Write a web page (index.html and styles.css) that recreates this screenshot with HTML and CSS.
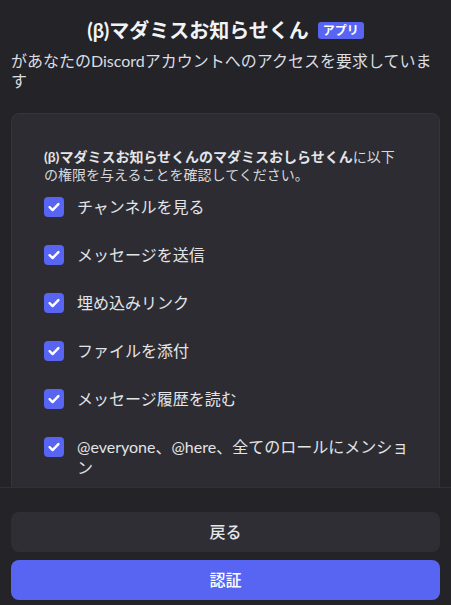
FILE: index.html
```html
<!DOCTYPE html>
<html lang="ja">
<head>
<meta charset="utf-8">
<title>認証</title>
<link rel="stylesheet" href="styles.css">
</head>
<body>
<div class="page">
  <main class="content">
    <header class="header">
      <h1 class="title">(β)マダミスお知らせくん<span class="badge">アプリ</span></h1>
      <p class="subtitle">があなたのDiscordアカウントへのアクセスを要求しています</p>
    </header>
    <section class="card">
      <p class="intro"><b>(β)マダミスお知らせくんのマダミスおしらせくん</b>に以下の権限を与えることを確認してください。</p>
      <ul class="perms">
        <li class="perm"><span class="check"><svg viewBox="0 0 20 20" width="20" height="20"><path d="M5.6 10.2l3 2.9 5.8-6" fill="none" stroke="#fff" stroke-width="2.4" stroke-linecap="round" stroke-linejoin="round"/></svg></span><span class="label">チャンネルを見る</span></li>
        <li class="perm"><span class="check"><svg viewBox="0 0 20 20" width="20" height="20"><path d="M5.6 10.2l3 2.9 5.8-6" fill="none" stroke="#fff" stroke-width="2.4" stroke-linecap="round" stroke-linejoin="round"/></svg></span><span class="label">メッセージを送信</span></li>
        <li class="perm"><span class="check"><svg viewBox="0 0 20 20" width="20" height="20"><path d="M5.6 10.2l3 2.9 5.8-6" fill="none" stroke="#fff" stroke-width="2.4" stroke-linecap="round" stroke-linejoin="round"/></svg></span><span class="label">埋め込みリンク</span></li>
        <li class="perm"><span class="check"><svg viewBox="0 0 20 20" width="20" height="20"><path d="M5.6 10.2l3 2.9 5.8-6" fill="none" stroke="#fff" stroke-width="2.4" stroke-linecap="round" stroke-linejoin="round"/></svg></span><span class="label">ファイルを添付</span></li>
        <li class="perm"><span class="check"><svg viewBox="0 0 20 20" width="20" height="20"><path d="M5.6 10.2l3 2.9 5.8-6" fill="none" stroke="#fff" stroke-width="2.4" stroke-linecap="round" stroke-linejoin="round"/></svg></span><span class="label">メッセージ履歴を読む</span></li>
        <li class="perm"><span class="check"><svg viewBox="0 0 20 20" width="20" height="20"><path d="M5.6 10.2l3 2.9 5.8-6" fill="none" stroke="#fff" stroke-width="2.4" stroke-linecap="round" stroke-linejoin="round"/></svg></span><span class="label">@everyone、@here、全てのロールにメンション</span></li>
      </ul>
    </section>
  </main>
  <footer class="footer">
    <button class="btn btn-secondary" type="button">戻る</button>
    <button class="btn btn-primary" type="button">認証</button>
  </footer>
</div>
</body>
</html>
```
FILE: styles.css
```css
* { box-sizing: border-box; }
html, body {
  margin: 0;
  padding: 0;
  height: 100%;
  background: #232328;
  color: #dfe0e4;
  font-family: "Lato", "Noto Sans CJK JP", sans-serif;
}
.page {
  height: 100vh;
  display: flex;
  flex-direction: column;
  overflow: hidden;
}
.content {
  flex: 1;
  min-height: 0;
  overflow: hidden;
  padding: 18px 11px 0;
}
.title {
  margin: 0;
  font-size: 20px;
  line-height: 24px;
  font-weight: 700;
  color: #f2f3f5;
  display: flex;
  justify-content: center;
  align-items: center;
}
.badge {
  display: inline-flex;
  align-items: center;
  height: 17px;
  margin-left: 9px;
  padding: 0 5px;
  background: #5865f2;
  color: #fff;
  border-radius: 3px;
  font-size: 12px;
  font-weight: 700;
  line-height: 17px;
}
.subtitle {
  margin: 9px 0 0;
  font-size: 16px;
  line-height: 20px;
  color: #dbdde1;
}
.card {
  margin-top: 22px;
  background: #2c2c32;
  border: 1px solid #34343a;
  border-radius: 8px;
  padding: 34px 32px 32px;
}
.intro {
  margin: 0;
  font-size: 14px;
  line-height: 18px;
  color: #d6d8dc;
}
.intro b { font-weight: 700; color: #e4e5e8; }
.perms {
  list-style: none;
  margin: 13px 0 0;
  padding: 0;
  display: flex;
  flex-direction: column;
  gap: 28px;
}
.perm {
  display: flex;
  align-items: flex-start;
  gap: 13px;
}
.check {
  flex: none;
  width: 20px;
  height: 20px;
  border-radius: 4px;
  background: #5865f2;
  display: flex;
}
.label {
  font-size: 16px;
  line-height: 21px;
  color: #e3e4e8;
  margin-top: -1px;
  margin-right: -8px;
}
.footer {
  flex: none;
  border-top: 1px solid #303036;
  background: #232328;
  padding: 24px 11px 5px;
  display: flex;
  flex-direction: column;
  gap: 8px;
}
.btn {
  height: 40px;
  border: none;
  border-radius: 8px;
  font-family: inherit;
  font-size: 16px;
  line-height: 24px;
  font-weight: 500;
  color: #fff;
  cursor: pointer;
  padding: 0;
}
.btn-secondary { background: #2e2e34; color: #e6e7ea; }
.btn-primary { background: #5865f2; }
```
